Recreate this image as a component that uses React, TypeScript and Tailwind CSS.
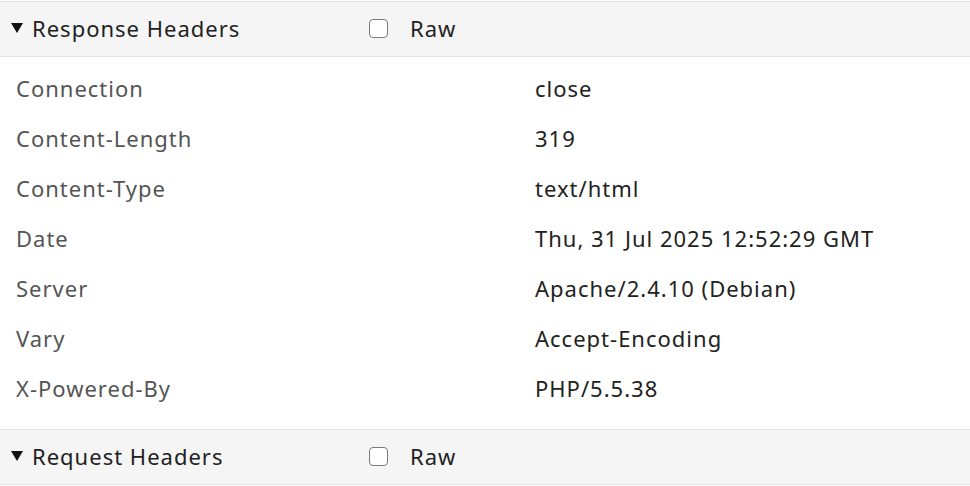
import React from "react";

const rows: [string, string][] = [
  ["Connection", "close"],
  ["Content-Length", "319"],
  ["Content-Type", "text/html"],
  ["Date", "Thu, 31 Jul 2025 12:52:29 GMT"],
  ["Server", "Apache/2.4.10 (Debian)"],
  ["Vary", "Accept-Encoding"],
  ["X-Powered-By", "PHP/5.5.38"],
];

function SectionHeader({ title }: { title: string }) {
  return (
    <div className="flex h-[56px] items-center border-y border-[#e4e4e4] bg-[#f5f5f5] pb-[2px] text-[#222] text-[22px] tracking-[1px]">
      <div className="flex w-[369px] items-center pl-[11px]">
        <svg width="12" height="12" viewBox="0 0 12 12" className="mr-[9px]">
          <polygon points="0,1 12,1 6,11" fill="#111" />
        </svg>
        <span>{title}</span>
      </div>
      <div className="flex items-center">
        <div className="box-border h-[19px] w-[19px] rounded-[4px] border-[1.5px] border-[#7a7a7a] bg-white" />
        <span className="ml-[22px]">Raw</span>
      </div>
    </div>
  );
}

export default function App() {
  return (
    <div
      className="h-[486px] w-[970px] overflow-hidden bg-white pt-[1px]"
      style={{ fontFamily: '"Noto Sans", "Open Sans", sans-serif' }}
    >
      <SectionHeader title="Response Headers" />
      <div className="pt-[6px] pb-[16px]">
        {rows.map(([k, v]) => (
          <div key={k} className="flex h-[50px] items-center text-[22px] tracking-[1px]">
            <div className="w-[535px] pl-[16px] text-[#555]">{k}</div>
            <div className="text-[#222]">{v}</div>
          </div>
        ))}
      </div>
      <SectionHeader title="Request Headers" />
    </div>
  );
}
